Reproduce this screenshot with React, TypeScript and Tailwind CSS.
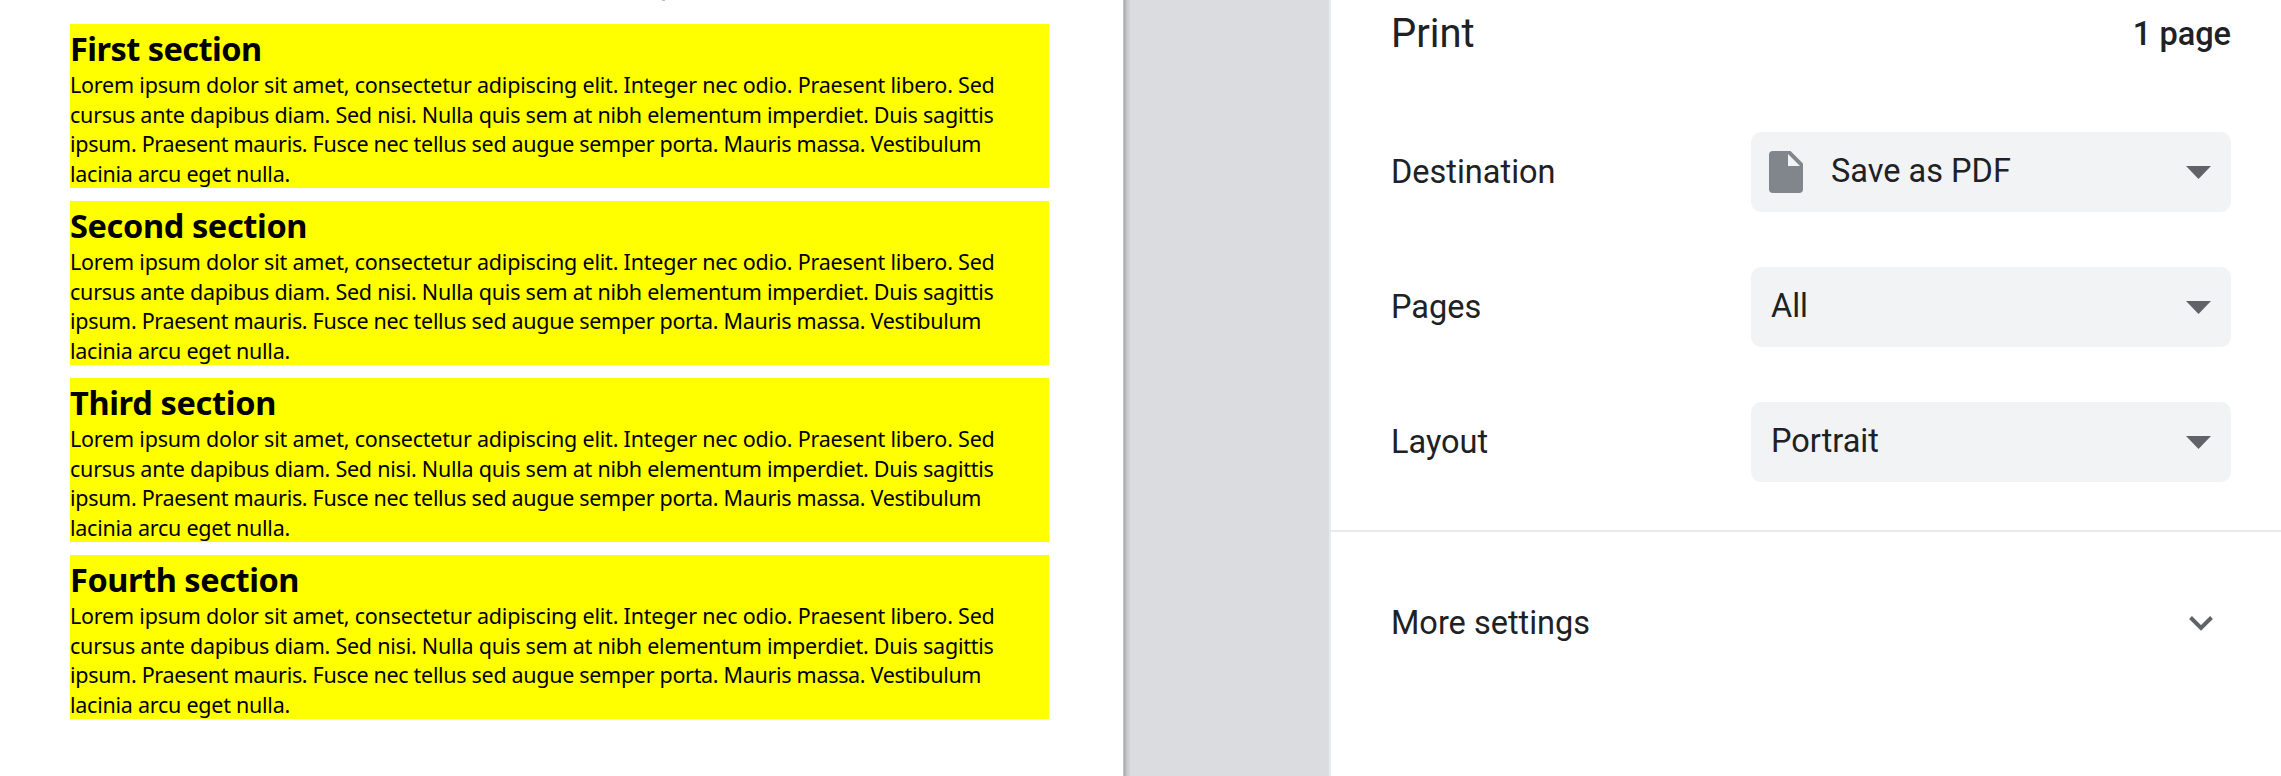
import React from "react";

const sections = [
  { title: "First section", tracking: "tracking-[-0.55px]" },
  { title: "Second section", tracking: "tracking-[-0.37px]" },
  { title: "Third section", tracking: "tracking-[-0.33px]" },
  { title: "Fourth section", tracking: "tracking-[-0.45px]" },
];

function Section({ title, tracking }: { title: string; tracking: string }) {
  return (
    <section className="h-[164px] w-[978.5px] bg-[#ffff00] text-black whitespace-nowrap">
      <h2 className={`h-[46px] pt-0.5 text-[32.5px] leading-[46px] font-bold ${tracking}`}>{title}</h2>
      <div className="text-[21.5px] leading-[29.5px]">
        <p className="tracking-[-0.207px]">Lorem ipsum dolor sit amet, consectetur adipiscing elit. Integer nec odio. Praesent libero. Sed</p>
        <p className="tracking-[-0.235px]">cursus ante dapibus diam. Sed nisi. Nulla quis sem at nibh elementum imperdiet. Duis sagittis</p>
        <p className="tracking-[-0.31px]">ipsum. Praesent mauris. Fusce nec tellus sed augue semper porta. Mauris massa. Vestibulum</p>
        <p className="tracking-[-0.25px]">lacinia arcu eget nulla.</p>
      </div>
    </section>
  );
}

function Row({ label, value, icon }: { label: string; value: string; icon?: boolean }) {
  return (
    <div className="flex h-20 items-center justify-between">
      <div className="pb-px text-[32.5px] leading-[40px]">{label}</div>
      <div className="flex h-20 w-[480px] items-center rounded-[10px] bg-[#f1f3f4] pr-5 pl-[18px]">
        {icon && (
          <svg className="mr-7 h-[42px] w-[34px]" viewBox="0 0 34 42">
            <path fill="#80868b" d="M4 0H21.5L34 12.5V38a4 4 0 0 1-4 4H4a4 4 0 0 1-4-4V4a4 4 0 0 1 4-4Z" />
            <path fill="#f1f3f4" d="M19 3V15H31Z" />
          </svg>
        )}
        <span className={icon ? "flex-1 pb-0.5 text-[32.5px] leading-[40px]" : "ml-0.5 flex-1 pb-0.5 text-[32.5px] leading-[40px]"}>{value}</span>
        <svg className="mt-px h-[13px] w-[25px]" viewBox="0 0 25 13">
          <path fill="#5f6368" d="M0 0H25L12.5 13Z" />
        </svg>
      </div>
    </div>
  );
}

export default function App() {
  return (
    <div className="flex h-[776px] w-[2281px] overflow-hidden bg-white">
      <main className="h-full w-[1123px] bg-white pl-[70px] font-['Noto_Sans',sans-serif]">
        <div className="h-6 pl-[592px]">
          <div className="h-px w-[3px] bg-[#b4bcd0]" />
        </div>
        <div className="flex flex-col gap-[13px]">
          {sections.map((s) => (
            <Section key={s.title} title={s.title} tracking={s.tracking} />
          ))}
        </div>
      </main>
      <div className="h-full w-[206px] bg-[linear-gradient(to_right,#c4c5c7_0px,#c4c5c7_1px,#a8a9ad_1px,#c6c8cc_4px,#dadce0_8px)]" />
      <aside className="flex h-full w-[952px] flex-col border-l-2 border-[#e8eaed] bg-white font-['Roboto',sans-serif] text-[#202124]">
        <header className="flex h-[132px] justify-between pr-[50px] pl-[60px]">
          <h1 className="pt-2.5 text-[40px] leading-[48px]">Print</h1>
          <span className="pt-3.5 text-[32.5px] leading-[40px] font-medium">1 page</span>
        </header>
        <div className="flex h-[398px] flex-col gap-[55px] pr-[50px] pl-[60px]">
          <Row label="Destination" value="Save as PDF" icon />
          <Row label="Pages" value="All" />
          <Row label="Layout" value="Portrait" />
        </div>
        <div className="flex h-[184px] items-center justify-between border-t-2 border-[#e8eaed] pr-[68px] pl-[60px]">
          <span className="text-[32.5px] leading-[40px]">More settings</span>
          <svg className="h-[15px] w-6" viewBox="0 0 24 15">
            <path fill="none" stroke="#5f6368" strokeWidth="4" d="M1.5 1.5L12 12L22.5 1.5" />
          </svg>
        </div>
      </aside>
    </div>
  );
}
